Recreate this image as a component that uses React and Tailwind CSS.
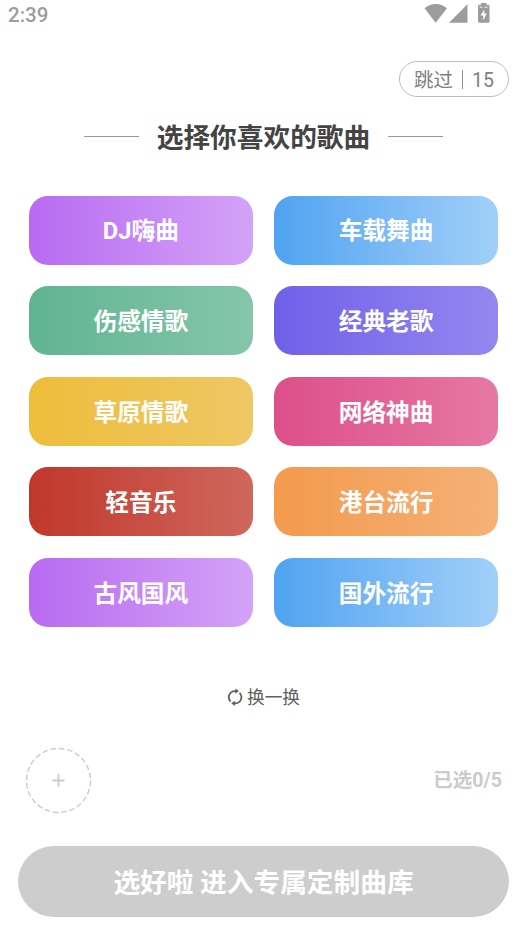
import React, { useState } from "react";

const genres = [
  { name: "DJ嗨曲", color: "from-[#b86bf1] to-[#d4a3f7]" },
  { name: "车载舞曲", color: "from-[#4fa3f1] to-[#a2cff9]" },
  { name: "伤感情歌", color: "from-[#60b491] to-[#85c6aa]" },
  { name: "经典老歌", color: "from-[#7060e9] to-[#9487f0]" },
  { name: "草原情歌", color: "from-[#edbd3b] to-[#efc764]" },
  { name: "网络神曲", color: "from-[#dd4f8a] to-[#e678a4]" },
  { name: "轻音乐", color: "from-[#c1372b] to-[#cf675d]" },
  { name: "港台流行", color: "from-[#f39a4d] to-[#f5b177]" },
  { name: "古风国风", color: "from-[#b86bf1] to-[#d4a3f7]" },
  { name: "国外流行", color: "from-[#4fa3f1] to-[#a2cff9]" },
];

const StatusBar = () => (
  <div className="h-[28px] shrink-0 flex justify-between items-start pl-[8px] pr-[40px] text-[#9c9c9c]">
    <span className="text-[20.500px] leading-[30px] font-medium">2:39</span>
    <svg width="66" height="26" viewBox="0 0 66 26" fill="currentColor">
      <path d="M0.5 8.3C7 2.5 16.500 2.500 23 8.300L11.700 22.700Z" />
      <path d="M43.500 4.300V22.700H25Z" />
      <path d="M57 3h5.500v1.700h1.500c.9 0 1.500.6 1.500 1.500v15c0 .9-.6 1.500-1.500 1.500h-8.500c-.9 0-1.500-.6-1.500-1.500v-15c0-.9.6-1.500 1.500-1.500H57z" />
      <path d="M60.300 9.500v3.900h2.500l-3.600 7v-4.900h-2.600z" fill="#fff" />
      <path d="M55.700 7.200h2.800M60.700 7.200h2.800" stroke="#fff" strokeWidth="0.900" />
    </svg>
  </div>
);

const App = () => {
  const [selected, setSelected] = useState([]);

  const toggle = (name) => {
    if (selected.includes(name)) {
      setSelected(selected.filter((item) => item !== name));
    } else if (selected.length < 5) {
      setSelected([...selected, name]);
    }
  };

  return (
    <div className="w-[530px] h-[946px] overflow-hidden bg-white flex flex-col font-[Roboto,'Noto_Sans_CJK_SC',sans-serif]">
      <StatusBar />

      {/* Skip button with countdown */}
      <div className="flex justify-end pr-[21px] mt-[33px]">
        <button className="w-[110px] h-[36px] rounded-full border border-[#bdbdbd] flex items-center justify-center text-[19.500px] text-[#808080]">
          <span className="pt-[3px]">跳过</span>
          <span className="w-px h-[19px] bg-[#929292] mx-[9px]"></span>
          <span className="pt-[3px]">15</span>
        </button>
      </div>

      {/* Title */}
      <div className="w-[527px] h-[40px] mt-[19px] flex items-center justify-center gap-[18px]">
        <span className="w-[55px] h-px bg-[#999]"></span>
        <h1 className="text-[26.700px] leading-[40px] pt-[4px] font-bold text-[#444] whitespace-nowrap">选择你喜欢的歌曲</h1>
        <span className="w-[55px] h-px bg-[#999]"></span>
      </div>

      <div className="grid grid-cols-2 gap-x-[21.500px] gap-y-[21.600px] w-[469px] ml-[29px] mt-[39.700px]">
        {genres.map((genre) => (
          <button
            key={genre.name}
            onClick={() => toggle(genre.name)}
            className={`h-[69px] pt-[4px] rounded-[19px] bg-linear-to-r/srgb text-white text-[23.700px] font-bold ${genre.color}`}
          >
            {genre.name}
          </button>
        ))}
      </div>

      {/* Refresh the list */}
      <button className="w-[527px] h-[30px] mt-[55px] flex items-center justify-center gap-[4px] text-[17.700px] text-[#606060]">
        <svg width="16" height="18" viewBox="0 0 16 18" fill="none" stroke="currentColor" strokeWidth="1.800">
          <path d="M3.600 13.500A6.100 6.100 0 0 1 7.800 3.100H9" />
          <path d="M12.600 4.900A6.100 6.100 0 0 1 8.400 15.300H6.900" />
          <path d="M8.300 0.500L12 3.100L8.300 5.700ZM7.900 12.700L4.200 15.300L7.900 17.900Z" fill="currentColor" stroke="none" />
        </svg>
        <span className="pt-[3px]">换一换</span>
      </button>

      {/* Picked songs */}
      <div className="flex items-center justify-between pl-[25px] pr-[28px] mt-[35px] text-[#cbcbcb]">
        <svg width="67" height="67" viewBox="0 0 67 67" fill="none" stroke="currentColor">
          <circle cx="33.500" cy="33.500" r="32" strokeWidth="1.400" strokeDasharray="5.700 2.678" />
          <path d="M27.500 33.500h12M33.500 27.500v12" strokeWidth="1.900" />
        </svg>
        <span className="text-[19.500px] font-bold pt-[1px]">已选{selected.length}/5</span>
      </div>

      <button className="w-[491px] h-[71px] pt-[2px] ml-[18px] mt-[32px] rounded-full bg-[#cdcdcd] text-white text-[26.700px] font-bold">
        选好啦 进入专属定制曲库
      </button>
    </div>
  );
};

export default App;
